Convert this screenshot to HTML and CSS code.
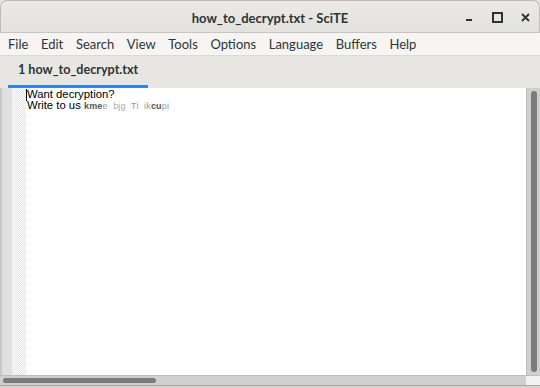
FILE: index.html
```html
<!DOCTYPE html>
<html>
<head>
<meta charset="utf-8">
<link rel="stylesheet" href="styles.css">
</head>
<body>
<div class="window">
  <header class="titlebar">
    <div class="title">how_to_decrypt.txt - SciTE</div>
    <div class="controls">
      <span class="ctl min"></span>
      <span class="ctl max"></span>
      <span class="ctl close">
        <svg width="9" height="9" viewBox="0 0 9 9"><path d="M1 1 L8 8 M8 1 L1 8" stroke="#2e3436" stroke-width="1.8"/></svg>
      </span>
    </div>
  </header>
  <nav class="menubar">
    <span>File</span><span>Edit</span><span>Search</span><span>View</span><span>Tools</span><span>Options</span><span>Language</span><span>Buffers</span><span>Help</span>
  </nav>
  <div class="tabbar">
    <div class="tab">1 how_to_decrypt.txt</div>
  </div>
  <div class="editor">
    <div class="gutter"></div>
    <div class="fold"></div>
    <div class="text">
      <div class="line"><span class="caret"></span>Want decryption?</div>
      <div class="line">Write to us <span class="blur"><b>kme</b>e  <i>bjg</i>  Ti  ik<b>cu</b>pi</span></div>
    </div>
    <div class="vscroll"><div class="vthumb"></div></div>
  </div>
  <div class="hscrollrow">
    <div class="hscroll"><div class="hthumb"></div></div>
    <div class="corner"></div>
  </div>
  <div class="bottomedge"></div>
</div>
</body>
</html>
```
FILE: styles.css
```css
* { box-sizing: border-box; }
html, body { margin: 0; padding: 0; background: #ffffff; }
body { width: 540px; height: 388px; overflow: hidden; }
.window {
  width: 540px; height: 388px;
  display: flex; flex-direction: column;
  background: #e8e6e3;
  font-family: "Lato", "Open Sans", sans-serif;
  color: #2e3436;
}
.titlebar {
  height: 33px;
  position: relative;
  background: linear-gradient(#eceae7, #e3e1de);
  border: 1px solid #bfbcb7;
  border-bottom: 1px solid #c8c5c0;
  border-radius: 7px 7px 0 0;
  display: flex; align-items: center; justify-content: center;
  padding-top: 2px;
}
.title { font-size: 13px; font-weight: 700; color: #2e3436; }
.controls {
  position: absolute; right: 0; top: 2px; bottom: 0;
  display: flex; align-items: center;
}
.ctl { width: 28px; height: 20px; display: flex; align-items: center; justify-content: center; }
.min::after { content: ""; width: 6px; height: 2px; background: #2e3436; margin-top: 5px; }
.max::after { content: ""; width: 7px; height: 7px; border: 2px solid #2e3436; }
.close svg { display: block; }
.menubar {
  height: 23px;
  background: #f6f5f4;
  border-bottom: 1px solid #dcdad6;
  display: flex; align-items: center;
  padding-left: 8px; gap: 12.6px;
  font-size: 13px; color: #2e3436;
}
.tabbar {
  height: 32px;
  background: #e8e6e3;
  display: flex; align-items: flex-end;
  padding-left: 8px;
}
.tab {
  width: 140px; height: 32px;
  border-bottom: 3px solid #3584e4;
  font-size: 12.6px; font-weight: 700;
  white-space: nowrap;
  padding-left: 10px; padding-top: 6px;
}
.editor {
  flex: 1;
  display: flex;
  background: #ffffff;
  min-height: 0;
}
.gutter { width: 12px; background: #e0e0e0; border-left: 2px solid #c8c8c8; }
.fold {
  width: 14px;
  background-color: #ffffff;
  background-image: repeating-conic-gradient(#e4e4e4 0 25%, #ffffff 0 50%);
  background-size: 2px 2px;
}
.text {
  flex: 1;
  padding-left: 1px; padding-top: 1px;
  font-family: "Liberation Sans", Arial, sans-serif;
  font-size: 11.3px; line-height: 11px; color: #000;
}
.line { height: 11px; white-space: pre; position: relative; }
.caret { position: absolute; left: -1px; top: 0; width: 1px; height: 12px; background: #000; }
.blur { color: #999; letter-spacing: 0.2px; font-size: 9px; }
.blur b { color: #555; font-weight: 700; }
.blur i { color: #aaa; font-style: normal; }
.vscroll {
  width: 14px; background: #cfcfcf;
  border-left: 1px solid #bdbdbd;
  padding: 3px 3px 3px 4px;
}
.vthumb { height: 100%; background: #7b7b7b; border-radius: 3px; }
.hscrollrow { height: 10px; display: flex; background: #cfcfcf; border-top: 1px solid #bdbdbd; }
.hscroll { flex: 1; padding: 2px 3px; }
.hthumb { width: 153px; height: 100%; background: #7b7b7b; border-radius: 3px; }
.corner { width: 14px; background: #f2f2f2; }
.bottomedge { height: 3px; background: #d6d4d1; border-top: 1px solid #aaa8a5; }
```
